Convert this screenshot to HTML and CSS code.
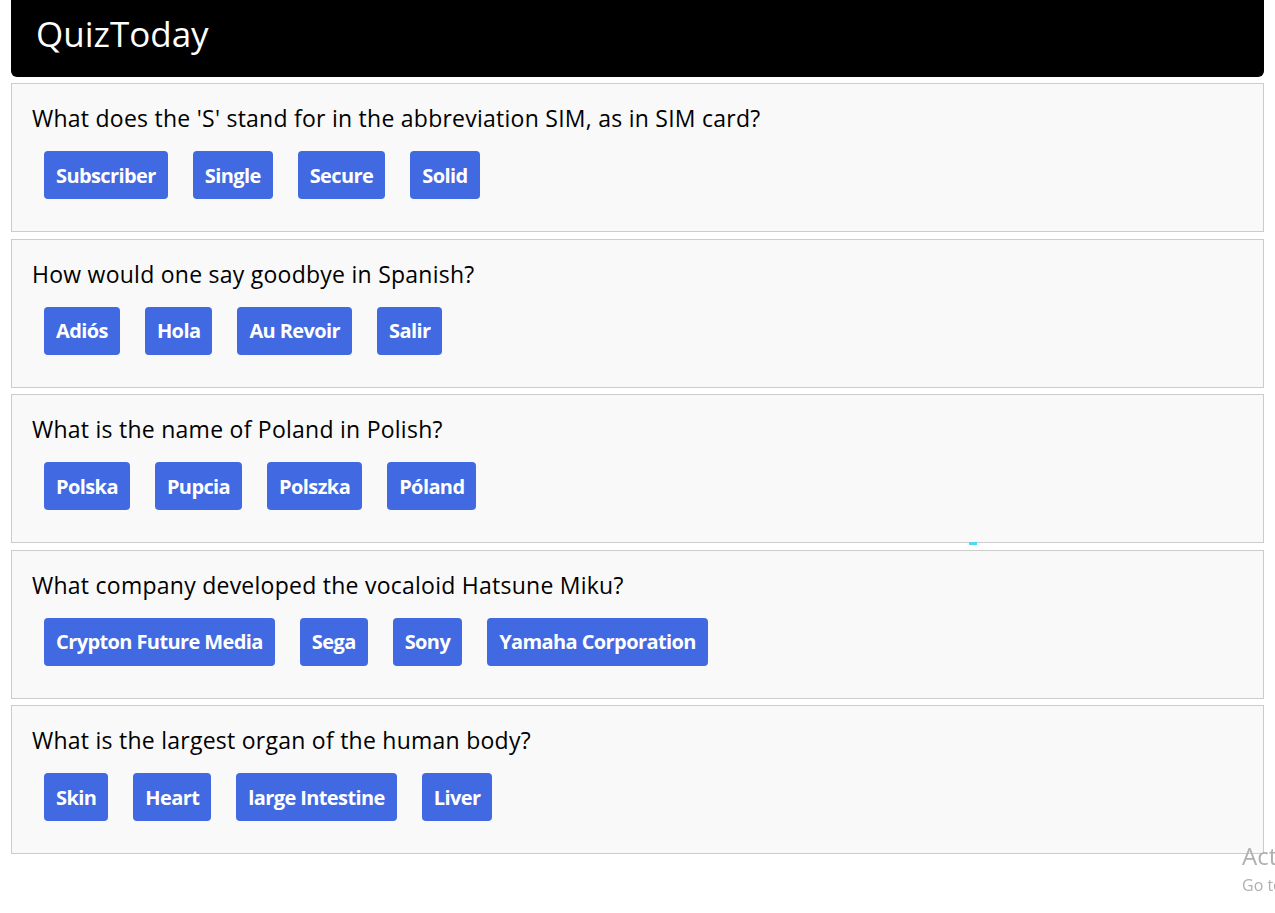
FILE: index.html
```html
<!DOCTYPE html>
<html lang="en">
<head>
<meta charset="utf-8">
<title>QuizToday</title>
<link rel="stylesheet" href="styles.css">
</head>
<body>
<div class="page">
  <header class="topbar">
    <h1 class="brand">QuizToday</h1>
  </header>
  <main class="quiz-list">
    <section class="card">
      <h2 class="question">What does the 'S' stand for in the abbreviation SIM, as in SIM card?</h2>
      <div class="answers">
        <button class="answer">Subscriber</button>
        <button class="answer">Single</button>
        <button class="answer">Secure</button>
        <button class="answer">Solid</button>
      </div>
    </section>
    <section class="card">
      <h2 class="question">How would one say goodbye in Spanish?</h2>
      <div class="answers">
        <button class="answer">Adiós</button>
        <button class="answer">Hola</button>
        <button class="answer">Au Revoir</button>
        <button class="answer">Salir</button>
      </div>
    </section>
    <section class="card card-mark">
      <h2 class="question">What is the name of Poland in Polish?</h2>
      <div class="answers">
        <button class="answer">Polska</button>
        <button class="answer">Pupcia</button>
        <button class="answer">Polszka</button>
        <button class="answer">Póland</button>
      </div>
      <span class="cursor-mark"></span>
    </section>
    <section class="card">
      <h2 class="question">What company developed the vocaloid Hatsune Miku?</h2>
      <div class="answers">
        <button class="answer">Crypton Future Media</button>
        <button class="answer">Sega</button>
        <button class="answer">Sony</button>
        <button class="answer">Yamaha Corporation</button>
      </div>
    </section>
    <section class="card">
      <h2 class="question">What is the largest organ of the human body?</h2>
      <div class="answers">
        <button class="answer">Skin</button>
        <button class="answer">Heart</button>
        <button class="answer">large Intestine</button>
        <button class="answer">Liver</button>
      </div>
    </section>
  </main>
</div>
<div class="watermark">
  <div class="wm-title">Activate Windows</div>
  <div class="wm-sub">Go to Settings to activate Windows.</div>
</div>
</body>
</html>
```

FILE: styles.css
```css
* { box-sizing: border-box; }

html, body {
  margin: 0;
  padding: 0;
  background: #ffffff;
  overflow: hidden;
}

body {
  font-family: "Open Sans", "Liberation Sans", sans-serif;
  color: #000;
}

.page {
  padding: 0 11px;
}

.topbar {
  background: #000;
  height: 77px;
  border-radius: 0 0 6px 6px;
  padding: 0 25px;
  display: flex;
  align-items: center;
}

.brand {
  margin: 0;
  color: #fff;
  font-size: 35px;
  font-weight: 400;
  letter-spacing: 0;
  line-height: 1;
  padding-bottom: 11px;
}

.quiz-list {
  display: flex;
  flex-direction: column;
  gap: 6.5px;
  padding-top: 6px;
}

.card {
  position: relative;
  height: 149px;
  background: #f9f9f9;
  border: 1px solid #cccccc;
  padding: 19px 20px 0 20px;
}

.question {
  margin: 0;
  font-size: 23px;
  font-weight: 400;
  line-height: 30px;
  letter-spacing: 0.25px;
}

.answers {
  display: flex;
  gap: 25px;
  padding-left: 12px;
  margin-top: 18px;
}

.answer {
  height: 48px;
  padding: 0 12px;
  border: none;
  border-radius: 4px;
  background: #4169e1;
  color: #fff;
  font-family: inherit;
  font-size: 20px;
  font-weight: 700;
  letter-spacing: -0.6px;
  cursor: pointer;
}

.cursor-mark {
  position: absolute;
  left: 957px;
  bottom: -3px;
  width: 8px;
  height: 3px;
  background: #4fd8ef;
}

.watermark {
  position: fixed;
  left: 1242px;
  top: 840px;
  white-space: nowrap;
  color: #b0b0b0;
  font-family: "Open Sans", "Liberation Sans", sans-serif;
}

.wm-title {
  font-size: 24px;
  line-height: 32px;
}

.wm-sub {
  font-size: 16px;
  line-height: 26px;
}
```
